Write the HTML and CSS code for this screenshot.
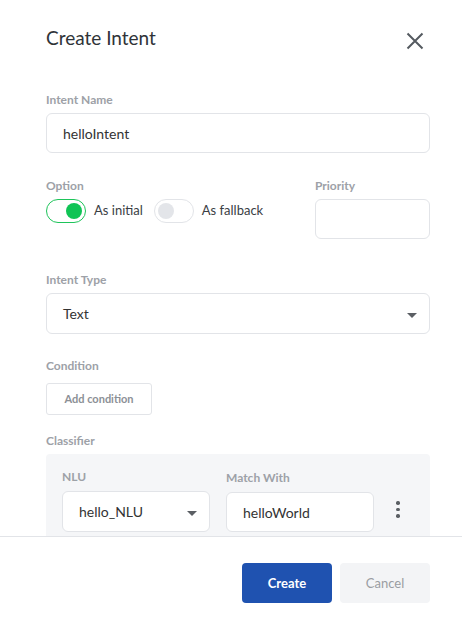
FILE: index.html
```html
<!DOCTYPE html>
<html>
<head>
<meta charset="utf-8">
<link rel="stylesheet" href="styles.css">
</head>
<body>
<div class="modal">
  <div class="header">
    <h1 class="title">Create Intent</h1>
    <button class="close" aria-label="Close">
      <svg width="18" height="18" viewBox="0 0 18 18"><path d="M1.5 1.5 L16.5 16.5 M16.5 1.5 L1.5 16.5" stroke="#555a60" stroke-width="2" fill="none"/></svg>
    </button>
  </div>
  <div class="body">
    <div class="field f-name">
      <div class="label">Intent Name</div>
      <div class="input">helloIntent</div>
    </div>
    <div class="row f-option">
      <div class="col-option">
        <div class="label">Option</div>
        <div class="toggles">
          <span class="toggle on"><span class="knob"></span></span>
          <span class="toggle-text">As initial</span>
          <span class="toggle off"><span class="knob"></span></span>
          <span class="toggle-text">As fallback</span>
        </div>
      </div>
      <div class="col-priority">
        <div class="label">Priority</div>
        <div class="input"></div>
      </div>
    </div>
    <div class="field f-type">
      <div class="label">Intent Type</div>
      <div class="input select">Text<span class="caret"></span></div>
    </div>
    <div class="field f-cond">
      <div class="label">Condition</div>
      <button class="btn-add">Add condition</button>
    </div>
    <div class="field f-class">
      <div class="label">Classifier</div>
      <div class="classifier">
        <div class="cls-col">
          <div class="label">NLU</div>
          <div class="input select">hello_NLU<span class="caret"></span></div>
        </div>
        <div class="cls-col">
          <div class="label">Match With</div>
          <div class="input">helloWorld</div>
        </div>
        <div class="kebab"><span></span><span></span><span></span></div>
      </div>
    </div>
  </div>
  <div class="footer">
    <button class="btn btn-primary">Create</button>
    <button class="btn btn-secondary">Cancel</button>
  </div>
</div>
</body>
</html>
```

FILE: styles.css
```css
* { box-sizing: border-box; }
html, body { margin: 0; padding: 0; background: #fff; }
body { font-family: Lato, "Open Sans", Arial, sans-serif; color: #333; }

.modal {
  width: 462px;
  height: 623px;
  display: flex;
  flex-direction: column;
  overflow: hidden;
}

.header {
  flex: 0 0 78px;
  display: flex;
  justify-content: space-between;
  align-items: flex-start;
  padding: 26px 38px 0 46px;
}
.title {
  margin: 0;
  font-size: 19px;
  line-height: 24px;
  font-weight: 400;
  color: #2f3338;
}
.close {
  margin-top: 6px;
  padding: 0;
  border: 0;
  background: none;
  width: 18px;
  height: 18px;
}
.close svg { display: block; }

.body {
  flex: 1;
  overflow: hidden;
  padding: 14px 32px 0 46px;
}

.label {
  font-size: 12px;
  line-height: 15px;
  font-weight: 700;
  color: #9da1a7;
  margin-bottom: 6px;
}

.input {
  height: 40px;
  border: 1px solid #e2e4e8;
  border-radius: 6px;
  background: #fff;
  padding: 0 16px;
  display: flex;
  align-items: center;
  font-size: 14px;
  color: #333;
}
.select { position: relative; height: 41px; }
.caret {
  position: absolute;
  right: 12px;
  top: 19px;
  width: 0;
  height: 0;
  border-left: 5px solid transparent;
  border-right: 5px solid transparent;
  border-top: 5px solid #5b5f64;
}

.f-name { margin-bottom: 25px; }

.row { display: flex; justify-content: space-between; }
.f-option { margin-bottom: 33px; }
.col-priority { width: 115px; }

.toggles {
  display: flex;
  align-items: center;
  height: 24px;
}
.toggle {
  position: relative;
  width: 40px;
  height: 24px;
  border-radius: 12px;
  border: 1px solid #e2e4e8;
  background: #fff;
  flex: none;
}
.toggle .knob {
  position: absolute;
  top: 3px;
  width: 16px;
  height: 16px;
  border-radius: 50%;
  background: #e3e5e9;
}
.toggle.on { border-color: #1ec45a; }
.toggle.on .knob { right: 3px; background: #10c455; }
.toggle.off .knob { left: 3px; }
.toggle-text {
  font-size: 13px;
  color: #3a3e44;
  margin: 0 11px 2px 8px;
  line-height: 20px;
}

.f-type { margin-bottom: 24px; }
.f-cond { margin-bottom: 18px; }
.f-cond .label { margin-bottom: 10px; }

.btn-add {
  display: block;
  height: 32px;
  width: 106px;
  border: 1px solid #e2e4e8;
  border-radius: 3px;
  background: #fff;
  font-family: inherit;
  font-size: 11px;
  font-weight: 700;
  color: #8c9096;
  padding: 0 0 1px;
}

.classifier {
  background: #f5f6f8;
  border-radius: 4px;
  padding: 15px 16px 20px 16px;
  display: flex;
  align-items: flex-end;
  gap: 16px;
}
.cls-col { width: 148px; }
.cls-col .label { margin-bottom: 7px; }
.kebab {
  width: 4px;
  height: 40px;
  display: flex;
  flex-direction: column;
  align-items: center;
  justify-content: center;
  gap: 3px;
  margin-left: 6px;
  padding-bottom: 5px;
}
.kebab span {
  flex: none;
  width: 3.4px;
  height: 3.4px;
  border-radius: 50%;
  background: #5b5f64;
}

.footer {
  flex: 0 0 87px;
  border-top: 1px solid #e2e4e8;
  display: flex;
  justify-content: flex-end;
  align-items: flex-start;
  gap: 8px;
  padding: 26px 32px 0 0;
}
.btn {
  width: 90px;
  height: 40px;
  border: 0;
  border-radius: 4px;
  font-family: inherit;
  font-size: 13px;
}
.btn-primary {
  background: #1f52b0;
  color: #fff;
  font-weight: 700;
}
.btn-secondary {
  background: #f3f4f6;
  color: #9a9da2;
  font-weight: 400;
}
```
